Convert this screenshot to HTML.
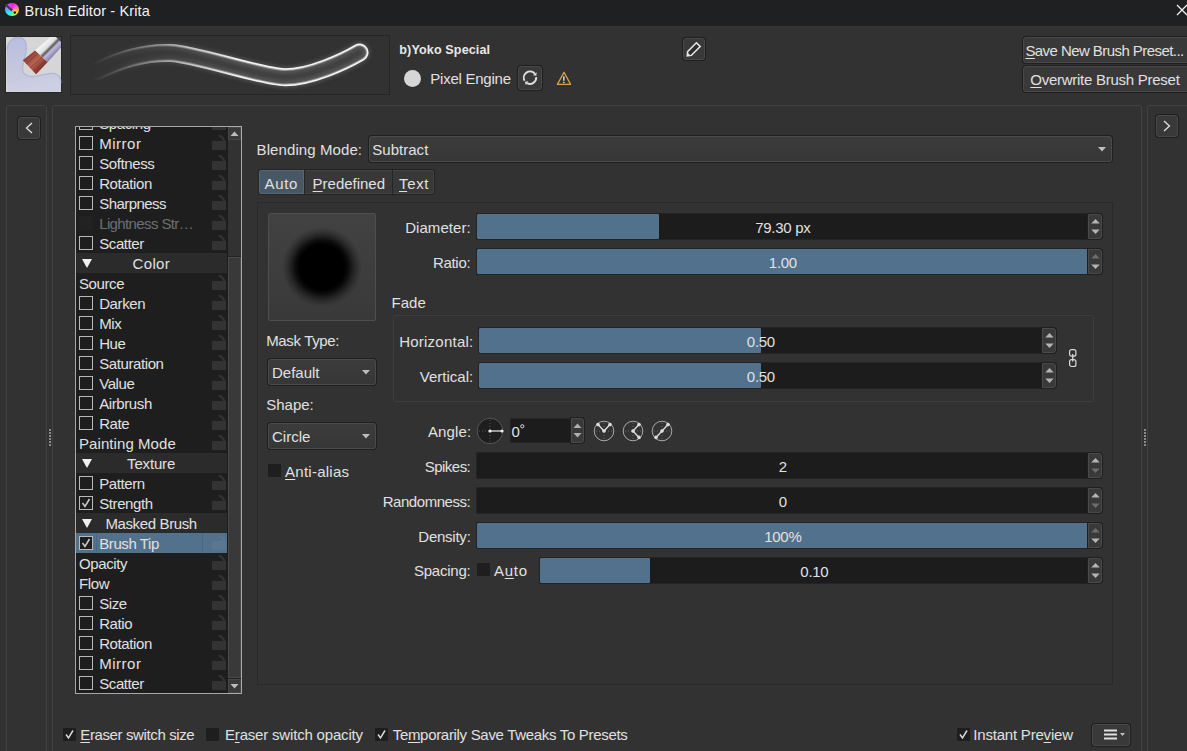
<!DOCTYPE html>
<html><head><meta charset="utf-8">
<style>
*{box-sizing:border-box;margin:0;padding:0}
html,body{width:1187px;height:751px;overflow:hidden;background:#323232;font-family:"Liberation Sans",sans-serif;color:#dcdcdc;font-size:15px}
.a{position:absolute}
.t{position:absolute;white-space:nowrap;line-height:17px;font-size:15px;color:#e0e0e0}
.btn{position:absolute;background:#393939;border:1px solid #494949;border-radius:3px;box-shadow:0 0 0 1px #1f1f1f}
.cb{position:absolute;width:14px;height:14px;border:1px solid #b9b9b9;background:#1e1e1e}
.cbd{position:absolute;width:13px;height:13px;background:#1e1e1e}
.sl{position:absolute;background:#1c1c1c;border:1px solid #242424;border-right:none;border-radius:2px 0 0 2px;overflow:hidden}
.fill{position:absolute;left:0;top:0;bottom:0;background:#52718d}
.spin{position:absolute;background:#393939;border:1px solid #4a4a4a;border-radius:0 3px 3px 0;box-shadow:0 0 0 1px #1f1f1f}
.combo{position:absolute;background:linear-gradient(#3c3c3c,#363636);border:1px solid #4a4a4a;border-radius:3px;box-shadow:0 0 0 1px #1f1f1f}
.u{text-decoration:underline;text-underline-offset:2px;text-decoration-thickness:1px}
.lock{position:absolute}
.hdr{position:absolute;left:76px;width:151px;height:20px;background:#2a2a2a}
</style></head><body>

<div class="a" style="left:0;top:0;width:1187px;height:26px;background:#1f2022"></div>
<div class="a" style="left:5.3px;top:3px;width:13.4px;height:13.4px;border-radius:50%;background:conic-gradient(#ff10f0 0deg,#ff60c0 60deg,#ffb040 100deg,#e8ff30 140deg,#40ffa0 185deg,#20f0ff 225deg,#70a0ff 270deg,#c060ff 320deg,#ff10f0 360deg)"></div>
<svg class="a" style="left:0;top:0" width="25" height="22"><path d="M5.5 4.5 L12.3 10.6" stroke="#3c3c3c" stroke-width="2.3"/><path d="M12.3 10.6 L13.8 11.8" stroke="#b0b0b0" stroke-width="1.6"/><circle cx="14.8" cy="12.6" r="1.3" fill="#222"/></svg>
<div class="t" style="left:24.60px;top:3.44px;font-size:14.6px;letter-spacing:0.101px;color:#f2f2f2;">Brush Editor - Krita</div>
<svg class="a" style="left:1176px;top:4px" width="12" height="12"><path d="M1 1L11 11M11 1L1 11" stroke="#f0f0f0" stroke-width="1.3"/></svg>
<svg class="a" style="left:5px;top:36px" width="57" height="57" viewBox="0 0 57 57">
<defs>
<linearGradient id="blob" x1="0" y1="0" x2="0.2" y2="1"><stop offset="0" stop-color="#b9bee0"/><stop offset="0.6" stop-color="#c4c7de"/><stop offset="1" stop-color="#cdd0e2"/></linearGradient>
<linearGradient id="fer" x1="36" y1="8" x2="48" y2="20" gradientUnits="userSpaceOnUse"><stop offset="0" stop-color="#f8f8f8"/><stop offset="0.4" stop-color="#e0e0e0"/><stop offset="0.55" stop-color="#5a5a5a"/><stop offset="0.7" stop-color="#c0bce0"/><stop offset="1" stop-color="#8884a8"/></linearGradient>
<linearGradient id="bri" x1="24" y1="19" x2="37" y2="32" gradientUnits="userSpaceOnUse"><stop offset="0" stop-color="#8e4034"/><stop offset="0.5" stop-color="#b86352"/><stop offset="1" stop-color="#7c3429"/></linearGradient>
</defs>
<rect x="0" y="0" width="57" height="57" fill="#262626"/>
<rect x="1" y="1" width="55" height="55" fill="#d6d6d6"/>
<path d="M2 14 C2.5 6 7 1.5 13 1.5 C19 1.5 21.5 5 21.5 11 C21.5 18 17.5 27 17.5 33 C17.5 38 22 41 29 40.5 C36 40 42 36.5 49 37.5 C54 38.5 56 42 56 47 L56 55 C50 56 10 56 4 55 C1.5 50 1.5 30 2 14 Z" fill="url(#blob)"/>
<path d="M2 14 C2.5 6 7 1.5 13 1.5 C19 1.5 21.5 5 21.5 11 C21.5 18 17.5 27 17.5 33 C17.5 38 22 41 29 40.5 C36 40 42 36.5 49 37.5 C54 38.5 56 42 56 47" fill="none" stroke="#a6aedc" stroke-width="1.3" opacity="0.7"/>
<path d="M30 14.4 L45.5 1 L56 1 L56 11.5 L42.5 26.2 Z" fill="url(#fer)"/>
<path d="M51 1 L56 1 L56 6 Z" fill="#444"/>
<path d="M17.8 24.3 L30 14.4 L42.5 26.2 L31.1 38.3 Z" fill="url(#bri)"/>
<path d="M33 17.5 L21 28 M37 21 L25 32 M40 24.5 L29 35" stroke="#6a2a22" stroke-width="0.8" opacity="0.6"/>
</svg>
<div class="a" style="left:70px;top:35px;width:320px;height:60px;border:1px solid #262626"></div>
<svg class="a" style="left:71px;top:36px" width="318" height="58" viewBox="71 36 318 58">
<defs>
<linearGradient id="fadeL" x1="92" y1="0" x2="330" y2="0" gradientUnits="userSpaceOnUse"><stop offset="0" stop-color="#fff" stop-opacity="0"/><stop offset="0.16" stop-color="#fff" stop-opacity="0.3"/><stop offset="0.41" stop-color="#fff" stop-opacity="0.75"/><stop offset="0.62" stop-color="#fff" stop-opacity="1"/><stop offset="1" stop-color="#fff" stop-opacity="1"/></linearGradient>
<mask id="m1" maskUnits="userSpaceOnUse" x="71" y="36" width="318" height="58"><rect x="71" y="36" width="318" height="58" fill="url(#fadeL)"/></mask>
<filter id="bl1" x="-10%" y="-50%" width="120%" height="200%"><feGaussianBlur stdDeviation="0.75"/></filter>
<filter id="bl2" x="-10%" y="-50%" width="120%" height="200%"><feGaussianBlur stdDeviation="2"/></filter>
</defs>
<g mask="url(#m1)">
<path d="M97 71 C125 57 148 52 171 53 C196.3 54.1 262.5 77.3 285 77.3 C311 77.3 345 61 359.5 52.5" fill="none" stroke="#888" stroke-width="20" stroke-linecap="round" filter="url(#bl2)" opacity="0.45"/>
<path d="M97 71 C125 57 148 52 171 53 C196.3 54.1 262.5 77.3 285 77.3 C311 77.3 345 61 359.5 52.5" fill="none" stroke="#f6f6f6" stroke-width="18" stroke-linecap="round" filter="url(#bl1)"/>
<path d="M97 71 C125 57 148 52 171 53 C196.3 54.1 262.5 77.3 285 77.3 C311 77.3 345 61 359.5 52.5" fill="none" stroke="#9a9a9a" stroke-width="14.6" stroke-linecap="round" filter="url(#bl1)"/>
<path d="M97 71 C125 57 148 52 171 53 C196.3 54.1 262.5 77.3 285 77.3 C311 77.3 345 61 359.5 52.5" fill="none" stroke="#585858" stroke-width="12.6" stroke-linecap="round" filter="url(#bl1)"/>
<path d="M97 71 C125 57 148 52 171 53 C196.3 54.1 262.5 77.3 285 77.3 C311 77.3 345 61 359.5 52.5" fill="none" stroke="#3c3c3c" stroke-width="7" stroke-linecap="round" filter="url(#bl2)"/>
</g>
</svg>
<div class="t" style="left:399.30px;top:42.13px;font-size:12.6px;letter-spacing:0.112px;font-weight:bold;color:#e8e8e8;">b)Yoko Special</div>
<div class="btn" style="left:683px;top:38px;width:22px;height:22px"></div>
<svg class="a" style="left:683px;top:38px" width="22" height="22" viewBox="0 0 22 22"><path d="M4.2 17.8 L4.6 13.6 L13.4 4.8 L17.2 8.6 L8.4 17.4 Z" fill="#2e2e2e" stroke="#e6e6e6" stroke-width="1.5" stroke-linejoin="miter"/><path d="M4.2 17.8 L4.6 14.6 L7.4 17.4Z" fill="#e6e6e6"/></svg>
<div class="a" style="left:403.5px;top:69.5px;width:17px;height:17px;border-radius:50%;background:#d6d6d6"></div>
<div class="t" style="left:430.30px;top:70.30px;font-size:15px;letter-spacing:-0.244px;">Pixel Engine</div>
<div class="btn" style="left:518px;top:66px;width:24px;height:24px"></div>
<svg class="a" style="left:518px;top:66px" width="24" height="24" viewBox="0 0 24 24"><path d="M6.63 14.80 A6.2 6.2 0 0 1 16.75 7.71 M18.18 11.16 A6.2 6.2 0 0 1 9.09 17.17" fill="none" stroke="#dedede" stroke-width="1.9"/><path d="M18.42 9.71 L18.59 6.17 L14.91 9.26Z M6.79 15.95 L7.96 19.29 L10.22 15.06Z" fill="#dedede"/></svg>
<svg class="a" style="left:556px;top:71px" width="16" height="15" viewBox="0 0 16 15"><path d="M8 1.3 L14.6 13.4 L1.4 13.4 Z" fill="none" stroke="#d8a440" stroke-width="1.3" stroke-linejoin="round"/><path d="M7.8 5.3 L7.8 9.8" stroke="#d4d4d4" stroke-width="1.5"/><rect x="7" y="10.8" width="1.6" height="1.3" fill="#d4d4d4"/></svg>
<div class="btn" style="left:1023px;top:37px;width:170px;height:26px"></div>
<div class="t" style="left:1025.40px;top:42.30px;font-size:15px;letter-spacing:-0.563px;"><span class="u">S</span>ave New Brush Preset...</div>
<div class="btn" style="left:1023px;top:66px;width:170px;height:26px"></div>
<div class="t" style="left:1030.30px;top:71.30px;font-size:15px;letter-spacing:-0.264px;"><span class="u">O</span>verwrite Brush Preset</div>
<div class="a" style="left:6px;top:105px;width:41px;height:700px;border:1px solid #424242;border-radius:3px"></div>
<div class="a" style="left:52px;top:105px;width:1090px;height:700px;border:1px solid #424242;border-radius:3px"></div>
<div class="a" style="left:1147px;top:105px;width:60px;height:700px;border:1px solid #424242;border-radius:3px"></div>
<div class="btn" style="left:18px;top:117px;width:22px;height:22px"></div>
<svg class="a" style="left:18px;top:117px" width="22" height="22"><path d="M14 6 L8.5 11 L14 16" fill="none" stroke="#e0e0e0" stroke-width="1.3"/></svg>
<div class="btn" style="left:1156px;top:115px;width:22px;height:22px"></div>
<svg class="a" style="left:1156px;top:115px" width="22" height="22"><path d="M8 6 L13.5 11 L8 16" fill="none" stroke="#e0e0e0" stroke-width="1.3"/></svg>
<div class="a" style="left:49px;top:429px;width:2px;height:2px;background:#8a8a8a"></div>
<div class="a" style="left:49px;top:432px;width:2px;height:2px;background:#8a8a8a"></div>
<div class="a" style="left:49px;top:435px;width:2px;height:2px;background:#8a8a8a"></div>
<div class="a" style="left:49px;top:438px;width:2px;height:2px;background:#8a8a8a"></div>
<div class="a" style="left:49px;top:441px;width:2px;height:2px;background:#8a8a8a"></div>
<div class="a" style="left:49px;top:444px;width:2px;height:2px;background:#8a8a8a"></div>
<div class="a" style="left:1144px;top:429px;width:2px;height:2px;background:#8a8a8a"></div>
<div class="a" style="left:1144px;top:432px;width:2px;height:2px;background:#8a8a8a"></div>
<div class="a" style="left:1144px;top:435px;width:2px;height:2px;background:#8a8a8a"></div>
<div class="a" style="left:1144px;top:438px;width:2px;height:2px;background:#8a8a8a"></div>
<div class="a" style="left:1144px;top:441px;width:2px;height:2px;background:#8a8a8a"></div>
<div class="a" style="left:1144px;top:444px;width:2px;height:2px;background:#8a8a8a"></div>
<div class="a" style="left:75px;top:126px;width:167px;height:568px;border:1px solid #a8a8a8;background:#1e1e1e"></div>
<div class="a" style="left:227px;top:127px;width:14px;height:566px;background:#323232;border-left:1px solid #1c1c1c"></div>
<div class="a" style="left:228px;top:127px;width:13px;height:13px;background:#3a3a3a;border:1px solid #474747"></div>
<svg class="a" style="left:228px;top:127px" width="13" height="13"><path d="M2.5 9 L6.5 4.5 L10.5 9Z" fill="#bdbdbd"/></svg>
<div class="a" style="left:228px;top:256px;width:13px;height:1px;background:#222"></div>
<div class="a" style="left:228px;top:257px;width:13px;height:421px;background:#393939;border:1px solid #4a4a4a"></div>
<div class="a" style="left:228px;top:678px;width:13px;height:1px;background:#222"></div>
<div class="a" style="left:228px;top:679px;width:13px;height:14px;background:#3a3a3a;border:1px solid #474747"></div>
<svg class="a" style="left:228px;top:679px" width="13" height="14"><path d="M2.5 5 L6.5 9.5 L10.5 5Z" fill="#bdbdbd"/></svg>
<div class="a" style="left:76px;top:127px;width:151px;height:566px;overflow:hidden">
<svg class="lock" style="left:135px;top:-13px" width="16" height="17" viewBox="0 0 16 17"><path d="M8.7 2.2 Q12.2 3.2 13.2 7.5" fill="none" stroke="#333333" stroke-width="2.4" stroke-linecap="round"/><rect x="1" y="7" width="14" height="9" fill="#333333"/></svg>
<div class="cb" style="left:3px;top:-11px"></div>
<div class="t" style="left:23.20px;top:-11.70px;font-size:15px;letter-spacing:-0.400px;">Spacing</div>
<svg class="lock" style="left:135px;top:7px" width="16" height="17" viewBox="0 0 16 17"><path d="M8.7 2.2 Q12.2 3.2 13.2 7.5" fill="none" stroke="#333333" stroke-width="2.4" stroke-linecap="round"/><rect x="1" y="7" width="14" height="9" fill="#333333"/></svg>
<div class="cb" style="left:3px;top:9px"></div>
<div class="t" style="left:23.20px;top:8.30px;font-size:15px;letter-spacing:0.509px;">Mirror</div>
<svg class="lock" style="left:135px;top:27px" width="16" height="17" viewBox="0 0 16 17"><path d="M8.7 2.2 Q12.2 3.2 13.2 7.5" fill="none" stroke="#333333" stroke-width="2.4" stroke-linecap="round"/><rect x="1" y="7" width="14" height="9" fill="#333333"/></svg>
<div class="cb" style="left:3px;top:29px"></div>
<div class="t" style="left:23.20px;top:28.30px;font-size:15px;letter-spacing:-0.395px;">Softness</div>
<svg class="lock" style="left:135px;top:47px" width="16" height="17" viewBox="0 0 16 17"><path d="M8.7 2.2 Q12.2 3.2 13.2 7.5" fill="none" stroke="#333333" stroke-width="2.4" stroke-linecap="round"/><rect x="1" y="7" width="14" height="9" fill="#333333"/></svg>
<div class="cb" style="left:3px;top:49px"></div>
<div class="t" style="left:23.20px;top:48.30px;font-size:15px;letter-spacing:-0.400px;">Rotation</div>
<svg class="lock" style="left:135px;top:67px" width="16" height="17" viewBox="0 0 16 17"><path d="M8.7 2.2 Q12.2 3.2 13.2 7.5" fill="none" stroke="#333333" stroke-width="2.4" stroke-linecap="round"/><rect x="1" y="7" width="14" height="9" fill="#333333"/></svg>
<div class="cb" style="left:3px;top:69px"></div>
<div class="t" style="left:23.20px;top:68.30px;font-size:15px;letter-spacing:-0.551px;">Sharpness</div>
<svg class="lock" style="left:135px;top:87px" width="16" height="17" viewBox="0 0 16 17"><path d="M8.7 2.2 Q12.2 3.2 13.2 7.5" fill="none" stroke="#333333" stroke-width="2.4" stroke-linecap="round"/><rect x="1" y="7" width="14" height="9" fill="#333333"/></svg>
<div class="a" style="left:3px;top:89px;width:14px;height:14px;background:#222"></div>
<div class="t" style="left:23.20px;top:88.30px;font-size:15px;letter-spacing:-0.619px;color:#6e6e6e;">Lightness Str…</div>
<svg class="lock" style="left:135px;top:107px" width="16" height="17" viewBox="0 0 16 17"><path d="M8.7 2.2 Q12.2 3.2 13.2 7.5" fill="none" stroke="#333333" stroke-width="2.4" stroke-linecap="round"/><rect x="1" y="7" width="14" height="9" fill="#333333"/></svg>
<div class="cb" style="left:3px;top:109px"></div>
<div class="t" style="left:23.20px;top:108.30px;font-size:15px;letter-spacing:-0.400px;">Scatter</div>
<div class="a" style="left:0;top:126px;width:151px;height:20px;background:#2b2b2b"></div>
<svg class="a" style="left:6px;top:132px" width="10" height="9"><path d="M0 0 L10 0 L5 9Z" fill="#f0f0f0"/></svg>
<div class="t" style="left:56.60px;top:128.30px;font-size:15px;letter-spacing:0.339px;">Color</div>
<svg class="lock" style="left:135px;top:147px" width="16" height="17" viewBox="0 0 16 17"><path d="M8.7 2.2 Q12.2 3.2 13.2 7.5" fill="none" stroke="#333333" stroke-width="2.4" stroke-linecap="round"/><rect x="1" y="7" width="14" height="9" fill="#333333"/></svg>
<div class="t" style="left:3.00px;top:148.30px;font-size:15px;letter-spacing:-0.400px;">Source</div>
<svg class="lock" style="left:135px;top:167px" width="16" height="17" viewBox="0 0 16 17"><path d="M8.7 2.2 Q12.2 3.2 13.2 7.5" fill="none" stroke="#333333" stroke-width="2.4" stroke-linecap="round"/><rect x="1" y="7" width="14" height="9" fill="#333333"/></svg>
<div class="cb" style="left:3px;top:169px"></div>
<div class="t" style="left:23.20px;top:168.30px;font-size:15px;letter-spacing:-0.400px;">Darken</div>
<svg class="lock" style="left:135px;top:187px" width="16" height="17" viewBox="0 0 16 17"><path d="M8.7 2.2 Q12.2 3.2 13.2 7.5" fill="none" stroke="#333333" stroke-width="2.4" stroke-linecap="round"/><rect x="1" y="7" width="14" height="9" fill="#333333"/></svg>
<div class="cb" style="left:3px;top:189px"></div>
<div class="t" style="left:23.20px;top:188.30px;font-size:15px;letter-spacing:-0.400px;">Mix</div>
<svg class="lock" style="left:135px;top:207px" width="16" height="17" viewBox="0 0 16 17"><path d="M8.7 2.2 Q12.2 3.2 13.2 7.5" fill="none" stroke="#333333" stroke-width="2.4" stroke-linecap="round"/><rect x="1" y="7" width="14" height="9" fill="#333333"/></svg>
<div class="cb" style="left:3px;top:209px"></div>
<div class="t" style="left:23.20px;top:208.30px;font-size:15px;letter-spacing:-0.400px;">Hue</div>
<svg class="lock" style="left:135px;top:227px" width="16" height="17" viewBox="0 0 16 17"><path d="M8.7 2.2 Q12.2 3.2 13.2 7.5" fill="none" stroke="#333333" stroke-width="2.4" stroke-linecap="round"/><rect x="1" y="7" width="14" height="9" fill="#333333"/></svg>
<div class="cb" style="left:3px;top:229px"></div>
<div class="t" style="left:23.20px;top:228.30px;font-size:15px;letter-spacing:-0.400px;">Saturation</div>
<svg class="lock" style="left:135px;top:247px" width="16" height="17" viewBox="0 0 16 17"><path d="M8.7 2.2 Q12.2 3.2 13.2 7.5" fill="none" stroke="#333333" stroke-width="2.4" stroke-linecap="round"/><rect x="1" y="7" width="14" height="9" fill="#333333"/></svg>
<div class="cb" style="left:3px;top:249px"></div>
<div class="t" style="left:23.20px;top:248.30px;font-size:15px;letter-spacing:-0.400px;">Value</div>
<svg class="lock" style="left:135px;top:267px" width="16" height="17" viewBox="0 0 16 17"><path d="M8.7 2.2 Q12.2 3.2 13.2 7.5" fill="none" stroke="#333333" stroke-width="2.4" stroke-linecap="round"/><rect x="1" y="7" width="14" height="9" fill="#333333"/></svg>
<div class="cb" style="left:3px;top:269px"></div>
<div class="t" style="left:23.20px;top:268.30px;font-size:15px;letter-spacing:-0.400px;">Airbrush</div>
<svg class="lock" style="left:135px;top:287px" width="16" height="17" viewBox="0 0 16 17"><path d="M8.7 2.2 Q12.2 3.2 13.2 7.5" fill="none" stroke="#333333" stroke-width="2.4" stroke-linecap="round"/><rect x="1" y="7" width="14" height="9" fill="#333333"/></svg>
<div class="cb" style="left:3px;top:289px"></div>
<div class="t" style="left:23.20px;top:288.30px;font-size:15px;letter-spacing:-0.400px;">Rate</div>
<svg class="lock" style="left:135px;top:307px" width="16" height="17" viewBox="0 0 16 17"><path d="M8.7 2.2 Q12.2 3.2 13.2 7.5" fill="none" stroke="#333333" stroke-width="2.4" stroke-linecap="round"/><rect x="1" y="7" width="14" height="9" fill="#333333"/></svg>
<div class="t" style="left:3.00px;top:308.30px;font-size:15px;letter-spacing:0.075px;">Painting Mode</div>
<div class="a" style="left:0;top:326px;width:151px;height:20px;background:#2b2b2b"></div>
<svg class="a" style="left:6px;top:332px" width="10" height="9"><path d="M0 0 L10 0 L5 9Z" fill="#f0f0f0"/></svg>
<div class="t" style="left:51.10px;top:328.30px;font-size:15px;letter-spacing:-0.165px;">Texture</div>
<svg class="lock" style="left:135px;top:347px" width="16" height="17" viewBox="0 0 16 17"><path d="M8.7 2.2 Q12.2 3.2 13.2 7.5" fill="none" stroke="#333333" stroke-width="2.4" stroke-linecap="round"/><rect x="1" y="7" width="14" height="9" fill="#333333"/></svg>
<div class="cb" style="left:3px;top:349px"></div>
<div class="t" style="left:23.20px;top:348.30px;font-size:15px;letter-spacing:-0.400px;">Pattern</div>
<svg class="lock" style="left:135px;top:367px" width="16" height="17" viewBox="0 0 16 17"><path d="M8.7 2.2 Q12.2 3.2 13.2 7.5" fill="none" stroke="#333333" stroke-width="2.4" stroke-linecap="round"/><rect x="1" y="7" width="14" height="9" fill="#333333"/></svg>
<div class="cb" style="left:3px;top:369px"></div>
<svg class="a" style="left:3px;top:369px" width="14" height="14"><path d="M3.5 7 L6 10.5 L10.5 3" fill="none" stroke="#cfcfcf" stroke-width="1.5"/></svg>
<div class="t" style="left:23.20px;top:368.30px;font-size:15px;letter-spacing:-0.400px;">Strength</div>
<div class="a" style="left:0;top:386px;width:151px;height:20px;background:#2b2b2b"></div>
<svg class="a" style="left:6px;top:392px" width="10" height="9"><path d="M0 0 L10 0 L5 9Z" fill="#f0f0f0"/></svg>
<div class="t" style="left:29.40px;top:388.30px;font-size:15px;letter-spacing:-0.370px;">Masked Brush</div>
<div class="a" style="left:0;top:406px;width:151px;height:20px;background:#52718d"></div>
<div class="a" style="left:20px;top:406px;width:1px;height:20px;background:#4a6680"></div>
<div class="a" style="left:126px;top:406px;width:1px;height:20px;background:#4a6680"></div>
<svg class="lock" style="left:135px;top:407px" width="16" height="17" viewBox="0 0 16 17"><path d="M8.7 2.2 Q12.2 3.2 13.2 7.5" fill="none" stroke="#5a7792" stroke-width="2.4" stroke-linecap="round"/><rect x="1" y="7" width="14" height="9" fill="#5a7792"/></svg>
<div class="cb" style="left:3px;top:409px"></div>
<svg class="a" style="left:3px;top:409px" width="14" height="14"><path d="M3.5 7 L6 10.5 L10.5 3" fill="none" stroke="#cfcfcf" stroke-width="1.5"/></svg>
<div class="t" style="left:23.20px;top:408.30px;font-size:15px;letter-spacing:-0.400px;">Brush Tip</div>
<svg class="lock" style="left:135px;top:427px" width="16" height="17" viewBox="0 0 16 17"><path d="M8.7 2.2 Q12.2 3.2 13.2 7.5" fill="none" stroke="#333333" stroke-width="2.4" stroke-linecap="round"/><rect x="1" y="7" width="14" height="9" fill="#333333"/></svg>
<div class="t" style="left:3.00px;top:428.30px;font-size:15px;letter-spacing:-0.400px;">Opacity</div>
<svg class="lock" style="left:135px;top:447px" width="16" height="17" viewBox="0 0 16 17"><path d="M8.7 2.2 Q12.2 3.2 13.2 7.5" fill="none" stroke="#333333" stroke-width="2.4" stroke-linecap="round"/><rect x="1" y="7" width="14" height="9" fill="#333333"/></svg>
<div class="t" style="left:3.00px;top:448.30px;font-size:15px;letter-spacing:-0.400px;">Flow</div>
<svg class="lock" style="left:135px;top:467px" width="16" height="17" viewBox="0 0 16 17"><path d="M8.7 2.2 Q12.2 3.2 13.2 7.5" fill="none" stroke="#333333" stroke-width="2.4" stroke-linecap="round"/><rect x="1" y="7" width="14" height="9" fill="#333333"/></svg>
<div class="cb" style="left:3px;top:469px"></div>
<div class="t" style="left:23.20px;top:468.30px;font-size:15px;letter-spacing:-0.400px;">Size</div>
<svg class="lock" style="left:135px;top:487px" width="16" height="17" viewBox="0 0 16 17"><path d="M8.7 2.2 Q12.2 3.2 13.2 7.5" fill="none" stroke="#333333" stroke-width="2.4" stroke-linecap="round"/><rect x="1" y="7" width="14" height="9" fill="#333333"/></svg>
<div class="cb" style="left:3px;top:489px"></div>
<div class="t" style="left:23.20px;top:488.30px;font-size:15px;letter-spacing:-0.400px;">Ratio</div>
<svg class="lock" style="left:135px;top:507px" width="16" height="17" viewBox="0 0 16 17"><path d="M8.7 2.2 Q12.2 3.2 13.2 7.5" fill="none" stroke="#333333" stroke-width="2.4" stroke-linecap="round"/><rect x="1" y="7" width="14" height="9" fill="#333333"/></svg>
<div class="cb" style="left:3px;top:509px"></div>
<div class="t" style="left:23.20px;top:508.30px;font-size:15px;letter-spacing:-0.400px;">Rotation</div>
<svg class="lock" style="left:135px;top:527px" width="16" height="17" viewBox="0 0 16 17"><path d="M8.7 2.2 Q12.2 3.2 13.2 7.5" fill="none" stroke="#333333" stroke-width="2.4" stroke-linecap="round"/><rect x="1" y="7" width="14" height="9" fill="#333333"/></svg>
<div class="cb" style="left:3px;top:529px"></div>
<div class="t" style="left:23.20px;top:528.30px;font-size:15px;letter-spacing:0.509px;">Mirror</div>
<svg class="lock" style="left:135px;top:547px" width="16" height="17" viewBox="0 0 16 17"><path d="M8.7 2.2 Q12.2 3.2 13.2 7.5" fill="none" stroke="#333333" stroke-width="2.4" stroke-linecap="round"/><rect x="1" y="7" width="14" height="9" fill="#333333"/></svg>
<div class="cb" style="left:3px;top:549px"></div>
<div class="t" style="left:23.20px;top:548.30px;font-size:15px;letter-spacing:-0.400px;">Scatter</div>
</div>
<div class="t" style="left:256.60px;top:141.30px;font-size:15px;letter-spacing:0.089px;">Blending Mode:</div>
<div class="combo" style="left:369px;top:136px;width:743px;height:26px"></div>
<div class="t" style="left:372.30px;top:141.30px;font-size:15px;letter-spacing:0.020px;">Subtract</div>
<svg class="a" style="left:1097.5px;top:147px" width="8" height="5"><path d="M0 0 L8 0 L4 4.5Z" fill="#bdbdbd"/></svg>
<div class="a" style="left:258px;top:169px;width:177px;height:26px;border:1px solid #222;border-radius:3px;background:#383838;box-shadow:inset 0 0 0 1px #444"></div>
<div class="a" style="left:258px;top:169px;width:47px;height:26px;background:#475764;border:1px solid #262626;border-radius:3px 0 0 3px;box-shadow:inset 0 0 0 1px #55667a"></div>
<div class="a" style="left:392px;top:170px;width:1px;height:24px;background:#262626"></div>
<div class="t" style="left:264.60px;top:175.30px;font-size:15px;letter-spacing:0.614px;">Auto</div>
<div class="t" style="left:312.60px;top:175.30px;font-size:15px;letter-spacing:-0.017px;"><span class="u">P</span>redefined</div>
<div class="t" style="left:399.00px;top:175.30px;font-size:15px;letter-spacing:0.663px;"><span class="u">T</span>ext</div>
<div class="a" style="left:257px;top:202px;width:856px;height:483px;border:1px solid #2a2a2a"></div>
<div class="a" style="left:268px;top:213px;width:108px;height:108px;border:1px solid #4e4e4e;border-radius:2px;background:linear-gradient(#424242,#393939)"></div>
<div class="a" style="left:282px;top:227px;width:80px;height:80px;border-radius:50%;background:radial-gradient(circle closest-side,#000 0%,#000 56%,rgba(0,0,0,0.8) 67%,rgba(0,0,0,0.5) 76%,rgba(0,0,0,0.2) 88%,rgba(0,0,0,0) 100%)"></div>
<div class="t" style="left:266.20px;top:332.30px;font-size:15px;letter-spacing:-0.355px;">Mask Type:</div>
<div class="combo" style="left:268px;top:359px;width:108px;height:26px"></div>
<div class="t" style="left:272.00px;top:364.30px;font-size:15px;letter-spacing:0.000px;">Default</div>
<svg class="a" style="left:361.5px;top:370px" width="8" height="5"><path d="M0 0 L8 0 L4 4.5Z" fill="#bdbdbd"/></svg>
<div class="t" style="left:266.20px;top:396.30px;font-size:15px;letter-spacing:0.000px;">Shape:</div>
<div class="combo" style="left:268px;top:423px;width:108px;height:26px"></div>
<div class="t" style="left:272.00px;top:428.30px;font-size:15px;letter-spacing:0.000px;">Circle</div>
<svg class="a" style="left:361.5px;top:434px" width="8" height="5"><path d="M0 0 L8 0 L4 4.5Z" fill="#bdbdbd"/></svg>
<div class="cbd" style="left:268px;top:464px"></div>
<div class="t" style="left:285.10px;top:463.30px;font-size:15px;letter-spacing:0.245px;"><span class="u">A</span>nti-alias</div>
<div class="t" style="left:405.20px;top:219.30px;font-size:15px;letter-spacing:0.048px;">Diameter:</div>
<div class="sl" style="left:476px;top:213px;width:612px;height:27px"><div class="fill" style="width:182px;border-radius:1px"></div></div>
<div class="spin" style="left:1088px;top:214px;width:14px;height:25px"></div>
<svg class="a" style="left:1088px;top:214px" width="15" height="25"><path d="M3.3 9.5 L7.5 5 L11.7 9.5Z" fill="#b4b4b4"/><path d="M3.3 15.5 L7.5 20 L11.7 15.5Z" fill="#b4b4b4"/></svg>
<div class="t" style="left:755.28px;top:219.30px;font-size:15px;letter-spacing:-0.300px;">79.30 px</div>
<div class="t" style="left:432.92px;top:254.30px;font-size:15px;letter-spacing:-0.300px;">Ratio:</div>
<div class="sl" style="left:476px;top:248px;width:612px;height:27px"><div class="fill" style="width:611px;border-radius:1px"></div></div>
<div class="spin" style="left:1088px;top:249px;width:14px;height:25px"></div>
<svg class="a" style="left:1088px;top:249px" width="15" height="25"><path d="M3.3 9.5 L7.5 5 L11.7 9.5Z" fill="#6c6c6c"/><path d="M3.3 15.5 L7.5 20 L11.7 15.5Z" fill="#b4b4b4"/></svg>
<div class="t" style="left:768.85px;top:254.30px;font-size:15px;letter-spacing:-0.300px;">1.00</div>
<div class="t" style="left:391.60px;top:294.30px;font-size:15px;letter-spacing:0.000px;">Fade</div>
<div class="a" style="left:393px;top:315px;width:701px;height:87px;border:1px solid #3d3d3d;border-radius:3px"></div>
<div class="t" style="left:399.20px;top:333.30px;font-size:15px;letter-spacing:0.230px;">Horizontal:</div>
<div class="sl" style="left:478px;top:327px;width:564px;height:27px"><div class="fill" style="width:282px;border-radius:1px"></div></div>
<div class="spin" style="left:1042px;top:328px;width:14px;height:25px"></div>
<svg class="a" style="left:1042px;top:328px" width="15" height="25"><path d="M3.3 9.5 L7.5 5 L11.7 9.5Z" fill="#b4b4b4"/><path d="M3.3 15.5 L7.5 20 L11.7 15.5Z" fill="#b4b4b4"/></svg>
<div class="t" style="left:746.85px;top:333.30px;font-size:15px;letter-spacing:-0.300px;">0.50</div>
<div class="t" style="left:419.70px;top:368.30px;font-size:15px;letter-spacing:0.018px;">Vertical:</div>
<div class="sl" style="left:478px;top:362px;width:564px;height:27px"><div class="fill" style="width:282px;border-radius:1px"></div></div>
<div class="spin" style="left:1042px;top:363px;width:14px;height:25px"></div>
<svg class="a" style="left:1042px;top:363px" width="15" height="25"><path d="M3.3 9.5 L7.5 5 L11.7 9.5Z" fill="#b4b4b4"/><path d="M3.3 15.5 L7.5 20 L11.7 15.5Z" fill="#b4b4b4"/></svg>
<div class="t" style="left:746.85px;top:368.30px;font-size:15px;letter-spacing:-0.300px;">0.50</div>
<svg class="a" style="left:1066px;top:346px" width="14" height="24" viewBox="0 0 14 24"><rect x="3.6" y="3.6" width="6.3" height="6.6" rx="2" fill="none" stroke="#dadada" stroke-width="1.2"/><rect x="3.6" y="13.6" width="6.3" height="6.9" rx="2" fill="none" stroke="#dadada" stroke-width="1.2"/><path d="M6.75 8 V15.5" stroke="#dadada" stroke-width="1.3"/></svg>
<div class="t" style="left:427.90px;top:423.30px;font-size:15px;letter-spacing:0.154px;">Angle:</div>
<svg class="a" style="left:476px;top:417px" width="28" height="28" viewBox="0 0 28 28">
<circle cx="14" cy="14" r="12.8" fill="#1e1e1e" stroke="#555" stroke-width="1"/>
<path d="M14 3 V25 M3 14 H14" stroke="#555" stroke-width="1" stroke-dasharray="1 2"/>
<path d="M14 14 H26" stroke="#ddd" stroke-width="1.3"/><circle cx="14" cy="14" r="1.6" fill="#eee"/><circle cx="26" cy="14" r="1.6" fill="#eee"/>
</svg>
<div class="sl" style="left:510px;top:418px;width:61px;height:25px"></div>
<div class="spin" style="left:571px;top:418px;width:13px;height:25px"></div>
<svg class="a" style="left:571px;top:418px" width="13" height="25"><path d="M2.5 10 L6.5 5.5 L10.5 10Z M2.5 15 L6.5 19.5 L10.5 15Z" fill="#b0b0b0"/></svg>
<div class="t" style="left:511.50px;top:423.30px;font-size:15px;letter-spacing:0.000px;">0</div>
<svg class="a" style="left:519px;top:423px" width="7" height="7"><circle cx="3.3" cy="3.3" r="1.6" fill="none" stroke="#e0e0e0" stroke-width="1"/></svg>
<svg class="a" style="left:593px;top:420px" width="22" height="22" viewBox="0 0 22 22">
<circle cx="11" cy="11" r="9.8" fill="none" stroke="#a8a8a8" stroke-width="1"/>
<path d="M11 3 V19 M3 11 H19" stroke="#777" stroke-width="0.8" stroke-dasharray="1 2"/>
<path d="M5 4.6 L11 11 L17 4.6" fill="none" stroke="#dcdcdc" stroke-width="1.4"/><circle cx="5" cy="4.6" r="1.8" fill="#dcdcdc"/><circle cx="11" cy="11" r="1.8" fill="#dcdcdc"/><circle cx="17" cy="4.6" r="1.8" fill="#dcdcdc"/></svg>
<svg class="a" style="left:622px;top:420px" width="22" height="22" viewBox="0 0 22 22">
<circle cx="11" cy="11" r="9.8" fill="none" stroke="#a8a8a8" stroke-width="1"/>
<path d="M11 3 V19 M3 11 H19" stroke="#777" stroke-width="0.8" stroke-dasharray="1 2"/>
<path d="M17 4.6 L11 11 L17 17.4" fill="none" stroke="#dcdcdc" stroke-width="1.4"/><circle cx="17" cy="4.6" r="1.8" fill="#dcdcdc"/><circle cx="11" cy="11" r="1.8" fill="#dcdcdc"/><circle cx="17" cy="17.4" r="1.8" fill="#dcdcdc"/></svg>
<svg class="a" style="left:651px;top:420px" width="22" height="22" viewBox="0 0 22 22">
<circle cx="11" cy="11" r="9.8" fill="none" stroke="#a8a8a8" stroke-width="1"/>
<path d="M11 3 V19 M3 11 H19" stroke="#777" stroke-width="0.8" stroke-dasharray="1 2"/>
<path d="M5 17.4 L17 4.6" fill="none" stroke="#dcdcdc" stroke-width="1.4"/><circle cx="5" cy="17.4" r="1.8" fill="#dcdcdc"/><circle cx="11" cy="11" r="1.8" fill="#dcdcdc"/><circle cx="17" cy="4.6" r="1.8" fill="#dcdcdc"/></svg>
<div class="t" style="left:424.70px;top:458.30px;font-size:15px;letter-spacing:-0.515px;">Spikes:</div>
<div class="sl" style="left:476px;top:452px;width:612px;height:27px"><div class="fill" style="width:0px;border-radius:1px"></div></div>
<div class="spin" style="left:1088px;top:453px;width:14px;height:25px"></div>
<svg class="a" style="left:1088px;top:453px" width="15" height="25"><path d="M3.3 9.5 L7.5 5 L11.7 9.5Z" fill="#b4b4b4"/><path d="M3.3 15.5 L7.5 20 L11.7 15.5Z" fill="#6c6c6c"/></svg>
<div class="t" style="left:778.83px;top:458.30px;font-size:15px;letter-spacing:-0.300px;">2</div>
<div class="t" style="left:382.70px;top:493.30px;font-size:15px;letter-spacing:-0.445px;">Randomness:</div>
<div class="sl" style="left:476px;top:487px;width:612px;height:27px"><div class="fill" style="width:0px;border-radius:1px"></div></div>
<div class="spin" style="left:1088px;top:488px;width:14px;height:25px"></div>
<svg class="a" style="left:1088px;top:488px" width="15" height="25"><path d="M3.3 9.5 L7.5 5 L11.7 9.5Z" fill="#b4b4b4"/><path d="M3.3 15.5 L7.5 20 L11.7 15.5Z" fill="#6c6c6c"/></svg>
<div class="t" style="left:778.83px;top:493.30px;font-size:15px;letter-spacing:-0.300px;">0</div>
<div class="t" style="left:418.30px;top:528.30px;font-size:15px;letter-spacing:-0.241px;">Density:</div>
<div class="sl" style="left:476px;top:522px;width:612px;height:27px"><div class="fill" style="width:611px;border-radius:1px"></div></div>
<div class="spin" style="left:1088px;top:523px;width:14px;height:25px"></div>
<svg class="a" style="left:1088px;top:523px" width="15" height="25"><path d="M3.3 9.5 L7.5 5 L11.7 9.5Z" fill="#6c6c6c"/><path d="M3.3 15.5 L7.5 20 L11.7 15.5Z" fill="#b4b4b4"/></svg>
<div class="t" style="left:764.27px;top:528.30px;font-size:15px;letter-spacing:-0.300px;">100%</div>
<div class="t" style="left:413.90px;top:562.30px;font-size:15px;letter-spacing:-0.211px;">Spacing:</div>
<div class="cbd" style="left:477px;top:563px"></div>
<div class="t" style="left:494.00px;top:562.30px;font-size:15px;letter-spacing:0.714px;">A<span class="u">u</span>to</div>
<div class="sl" style="left:539px;top:557px;width:549px;height:27px"><div class="fill" style="width:110px;border-radius:1px"></div></div>
<div class="spin" style="left:1088px;top:558px;width:14px;height:25px"></div>
<svg class="a" style="left:1088px;top:558px" width="15" height="25"><path d="M3.3 9.5 L7.5 5 L11.7 9.5Z" fill="#b4b4b4"/><path d="M3.3 15.5 L7.5 20 L11.7 15.5Z" fill="#b4b4b4"/></svg>
<div class="t" style="left:800.35px;top:563.30px;font-size:15px;letter-spacing:-0.300px;">0.10</div>
<div class="cbd" style="left:63px;top:728px"></div>
<svg class="a" style="left:63px;top:728px" width="13" height="13"><path d="M3 6.5 L5.5 10 L10 2.5" fill="none" stroke="#d8d8d8" stroke-width="1.5"/></svg>
<div class="t" style="left:80.30px;top:726.30px;font-size:15px;letter-spacing:-0.380px;"><span class="u">E</span>raser switch size</div>
<div class="cbd" style="left:206px;top:728px"></div>
<div class="t" style="left:225.00px;top:726.30px;font-size:15px;letter-spacing:-0.186px;">E<span class="u">r</span>aser switch opacity</div>
<div class="cbd" style="left:375px;top:728px"></div>
<svg class="a" style="left:375px;top:728px" width="13" height="13"><path d="M3 6.5 L5.5 10 L10 2.5" fill="none" stroke="#d8d8d8" stroke-width="1.5"/></svg>
<div class="t" style="left:392.70px;top:726.30px;font-size:15px;letter-spacing:-0.310px;">Te<span class="u">m</span>porarily Save Tweaks To Presets</div>
<div class="cbd" style="left:957px;top:728px"></div>
<svg class="a" style="left:957px;top:728px" width="13" height="13"><path d="M3 6.5 L5.5 10 L10 2.5" fill="none" stroke="#d8d8d8" stroke-width="1.5"/></svg>
<div class="t" style="left:973.30px;top:726.30px;font-size:15px;letter-spacing:-0.203px;">Instant Pre<span class="u">v</span>iew</div>
<div class="btn" style="left:1092px;top:724px;width:38px;height:22px"></div>
<svg class="a" style="left:1104px;top:729px" width="24" height="12"><path d="M0 1.5 H13 M0 5.5 H13 M0 9.5 H13" stroke="#e0e0e0" stroke-width="1.8"/><path d="M16 4 L21 4 L18.5 7Z" fill="#c0c0c0"/></svg>
</body></html>
